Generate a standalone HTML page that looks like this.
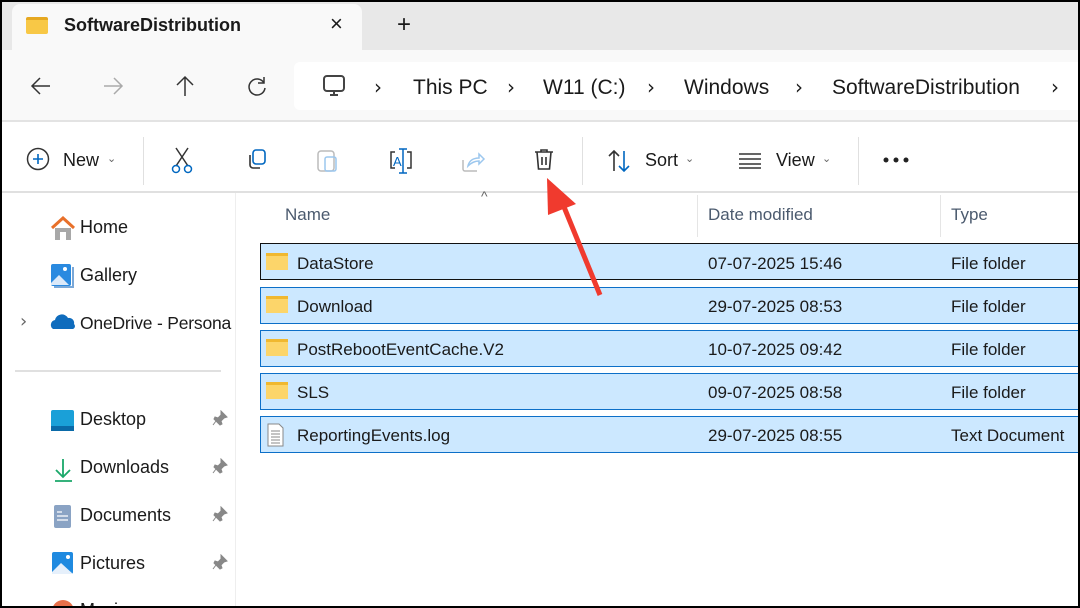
<!DOCTYPE html>
<html><head><style>
*{margin:0;padding:0;box-sizing:border-box}
body{width:1080px;height:608px;overflow:hidden;background:#000;font-family:"Liberation Sans",sans-serif;color:#1a1a1a;position:relative}
.a{position:absolute}
.fr{position:absolute;left:2px;top:2px;right:2px;bottom:2px;background:#fff;overflow:hidden}
.t{position:absolute;white-space:nowrap}
</style></head><body>
<div class="fr">
<div class="a" style="left:0;top:0;width:1076px;height:48px;background:#e8e8e8"></div>
<div class="a" style="left:10px;top:2px;width:350px;height:46px;background:#f9f9f9;border-radius:8px 8px 0 0"></div>
<div class="a" style="left:24px;top:15px;width:22px;height:17px;background:#f8c846;border-top:3px solid #e6a820;border-radius:2px"></div>
<div class="t" style="left:62px;top:13px;font-size:18px;font-weight:bold;color:#1a1a1a">SoftwareDistribution</div>
<div class="t" style="left:328px;top:9px;font-size:22px">×</div>
<div class="t" style="left:395px;top:9px;font-size:24px">+</div>
<div class="a" style="left:0;top:48px;width:1076px;height:72px;background:#f9f9f9;border-bottom:2px solid #e3e3e3"></div>
<svg class="a" style="left:28px;top:74px" width="22" height="20"><path d="M20 10H2M10 2l-8 8 8 8" fill="none" stroke="#333" stroke-width="1.5"/></svg>
<svg class="a" style="left:100px;top:74px" width="22" height="20"><path d="M2 10h18M12 2l8 8-8 8" fill="none" stroke="#aaa" stroke-width="1.5"/></svg>
<svg class="a" style="left:172px;top:73px" width="22" height="22"><path d="M11 21V2M3 10l8-8 8 8" fill="none" stroke="#333" stroke-width="1.5"/></svg>
<svg class="a" style="left:244px;top:73px" width="22" height="22"><path d="M18 8A8 8 0 1 0 19 13M18 2v6h-6" fill="none" stroke="#333" stroke-width="1.5"/></svg>
<div class="a" style="left:292px;top:60px;width:790px;height:48px;background:#fff;border-radius:6px"></div>
<svg class="a" style="left:320px;top:72px" width="26" height="24"><rect x="2" y="2" width="20" height="15" rx="3" fill="none" stroke="#444" stroke-width="2"/><path d="M8 21h8M12 17v4" stroke="#444" stroke-width="2"/></svg>
<div class="t" style="left:372px;top:73px;font-size:20px;font-family:'DejaVu Sans'">›</div>
<div class="t" style="left:411px;top:74px;font-size:21px">This PC</div>
<div class="t" style="left:505px;top:73px;font-size:20px;font-family:'DejaVu Sans'">›</div>
<div class="t" style="left:541px;top:74px;font-size:21px">W11 (C:)</div>
<div class="t" style="left:645px;top:73px;font-size:20px;font-family:'DejaVu Sans'">›</div>
<div class="t" style="left:682px;top:74px;font-size:21px">Windows</div>
<div class="t" style="left:793px;top:73px;font-size:20px;font-family:'DejaVu Sans'">›</div>
<div class="t" style="left:830px;top:74px;font-size:21px">SoftwareDistribution</div>
<div class="t" style="left:1049px;top:73px;font-size:20px;font-family:'DejaVu Sans'">›</div>
<!-- toolbar -->
<svg class="a" style="left:24px;top:145px" width="26" height="26"><circle cx="12" cy="12" r="10.5" fill="none" stroke="#333" stroke-width="1.5"/><path d="M12 7v10M7 12h10" stroke="#0067c0" stroke-width="1.6"/></svg>
<div class="t" style="left:61px;top:148px;font-size:18px">New</div>
<div class="t" style="left:105px;top:150px;font-size:11px;color:#666">⌄</div>
<div class="a" style="left:141px;top:135px;width:1px;height:48px;background:#e0e0e0"></div>
<svg class="a" style="left:168px;top:144px" width="26" height="28"><path d="M6 2l12 18M18 2L6 20" stroke="#333" stroke-width="1.5"/><circle cx="6" cy="23" r="3.5" fill="none" stroke="#0067c0" stroke-width="1.5"/><circle cx="18" cy="23" r="3.5" fill="none" stroke="#0067c0" stroke-width="1.5"/></svg>
<svg class="a" style="left:243px;top:146px" width="26" height="26"><rect x="8" y="2" width="12" height="14" rx="3" fill="none" stroke="#0067c0" stroke-width="1.6"/><path d="M5 7v10a3 3 0 0 0 3 3h7" fill="none" stroke="#333" stroke-width="1.6"/></svg>
<svg class="a" style="left:313px;top:146px" width="26" height="26"><rect x="3" y="3" width="16" height="20" rx="3" fill="none" stroke="#bbb" stroke-width="1.5"/><rect x="10" y="9" width="11" height="14" rx="2" fill="none" stroke="#9cc7ee" stroke-width="1.5"/></svg>
<svg class="a" style="left:385px;top:145px" width="30" height="28"><path d="M8 5H4v16h4M20 5h4v16h-4" fill="none" stroke="#333" stroke-width="1.5"/><path d="M16 2v24M12 2h8M12 26h8" stroke="#0067c0" stroke-width="1.5"/><text x="6" y="19" font-size="13" fill="#0067c0" font-family="Liberation Sans">A</text></svg>
<svg class="a" style="left:458px;top:148px" width="26" height="24"><path d="M3 10v9a2 2 0 0 0 2 2h12" fill="none" stroke="#bbb" stroke-width="1.5"/><path d="M8 16c1-5 5-8 11-8V4l5 5-5 5v-3c-5 0-8 2-11 5z" fill="none" stroke="#9cc7ee" stroke-width="1.5"/></svg>
<svg class="a" style="left:530px;top:145px" width="26" height="28"><path d="M3 5h18M9 5V3h6v2M5 5l1.5 17h11L19 5M10 10v8M14 10v8" fill="none" stroke="#333" stroke-width="1.6"/></svg>
<div class="a" style="left:580px;top:135px;width:1px;height:48px;background:#e0e0e0"></div>
<svg class="a" style="left:605px;top:146px" width="26" height="26"><path d="M7 23V3M2 8l5-5 5 5" fill="none" stroke="#333" stroke-width="1.6"/><path d="M17 3v20M12 18l5 5 5-5" fill="none" stroke="#0067c0" stroke-width="1.6"/></svg>
<div class="t" style="left:643px;top:148px;font-size:18px">Sort</div>
<div class="t" style="left:683px;top:150px;font-size:11px;color:#666">⌄</div>
<svg class="a" style="left:736px;top:150px" width="26" height="18"><path d="M1 2h22M1 7h22M1 12h22M1 16h22" stroke="#333" stroke-width="1.5"/></svg>
<div class="t" style="left:774px;top:148px;font-size:18px">View</div>
<div class="t" style="left:820px;top:150px;font-size:11px;color:#666">⌄</div>
<div class="a" style="left:856px;top:135px;width:1px;height:48px;background:#e0e0e0"></div>
<svg class="a" style="left:880px;top:154px" width="30" height="8"><circle cx="4" cy="4" r="2.5" fill="#222"/><circle cx="14" cy="4" r="2.5" fill="#222"/><circle cx="24" cy="4" r="2.5" fill="#222"/></svg>
<div class="a" style="left:0;top:189px;width:1076px;height:2px;background:#e0e0e0"></div>
<!-- sidebar -->
<div class="a" style="left:233px;top:191px;width:1px;height:420px;background:#eee"></div>
<svg class="a" style="left:48px;top:214px" width="26" height="26"><path d="M2 12L13 2l11 10" fill="none" stroke="#e8702a" stroke-width="3"/><rect x="5" y="12" width="16" height="12" fill="#a8a8a8"/><rect x="10" y="16" width="6" height="8" fill="#fff"/></svg>
<div class="t" style="left:78px;top:215px;font-size:18px">Home</div>
<svg class="a" style="left:48px;top:261px" width="26" height="26"><rect x="1" y="1" width="20" height="22" rx="2" fill="#2a8ae0"/><path d="M1 20l8-8 10 10H1z" fill="#dbe9f9"/><circle cx="15" cy="6" r="2" fill="#fff"/><path d="M23 4v20H4" fill="none" stroke="#7aa8d8" stroke-width="2"/></svg>
<div class="t" style="left:78px;top:263px;font-size:18px">Gallery</div>
<div class="t" style="left:18px;top:309px;font-size:18px;color:#666;font-family:'DejaVu Sans'">›</div>
<svg class="a" style="left:48px;top:311px" width="26" height="18"><path d="M3 16a5 5 0 0 1 2-9 7 7 0 0 1 13-2 5 5 0 0 1 6 6 3 3 0 0 1-1 5z" fill="#0f6cbd"/></svg>
<div class="t" style="left:78px;top:311px;font-size:17.5px;letter-spacing:-0.2px">OneDrive - Persona</div>
<div class="a" style="left:13px;top:368px;width:206px;height:2px;background:#e0e0e0"></div>
<svg class="a" style="left:48px;top:407px" width="26" height="24"><rect x="1" y="1" width="23" height="21" rx="2" fill="#1aa0d8"/><rect x="1" y="17" width="23" height="5" fill="#0a6aa8"/></svg>
<div class="t" style="left:78px;top:407px;font-size:18px">Desktop</div>
<svg class="a" style="left:50px;top:455px" width="24" height="26"><path d="M11 2v18M4 13l7 7 7-7M3 24h17" fill="none" stroke="#1aa86a" stroke-width="1.8"/></svg>
<div class="t" style="left:78px;top:455px;font-size:18px">Downloads</div>
<svg class="a" style="left:50px;top:502px" width="22" height="26"><rect x="2" y="1" width="17" height="23" rx="2" fill="#8aa3c4"/><path d="M5 8h5M5 12h11M5 16h11" stroke="#fff" stroke-width="1.2"/></svg>
<div class="t" style="left:78px;top:503px;font-size:18px">Documents</div>
<svg class="a" style="left:48px;top:549px" width="26" height="26"><rect x="2" y="1" width="21" height="22" rx="2" fill="#1f8ae0"/><path d="M2 21l9-9 12 11H2z" fill="#e6f0fb"/><circle cx="18" cy="6" r="2" fill="#fff"/></svg>
<div class="t" style="left:78px;top:551px;font-size:18px">Pictures</div>
<div class="a" style="left:50px;top:598px;width:22px;height:22px;border-radius:50%;background:#e8704a"></div>
<div class="t" style="left:78px;top:598px;font-size:18px">Music</div>
<svg class="a" style="left:210px;top:408px" width="16" height="16"><path d="M9 1l6 6-3 1-3 3 1 3-2 1-6-6 1-2 3 1 3-3z M4 11l-3 4" fill="#888" stroke="#888"/></svg>
<svg class="a" style="left:210px;top:456px" width="16" height="16"><path d="M9 1l6 6-3 1-3 3 1 3-2 1-6-6 1-2 3 1 3-3z M4 11l-3 4" fill="#888" stroke="#888"/></svg>
<svg class="a" style="left:210px;top:504px" width="16" height="16"><path d="M9 1l6 6-3 1-3 3 1 3-2 1-6-6 1-2 3 1 3-3z M4 11l-3 4" fill="#888" stroke="#888"/></svg>
<svg class="a" style="left:210px;top:552px" width="16" height="16"><path d="M9 1l6 6-3 1-3 3 1 3-2 1-6-6 1-2 3 1 3-3z M4 11l-3 4" fill="#888" stroke="#888"/></svg>
<!-- headers -->
<div class="t" style="left:479px;top:186px;font-size:14px;color:#666">^</div>
<div class="t" style="left:283px;top:203px;font-size:17px;color:#4b5a6e">Name</div>
<div class="a" style="left:695px;top:193px;width:1px;height:42px;background:#e5e5e5"></div>
<div class="t" style="left:706px;top:203px;font-size:17px;color:#4b5a6e">Date modified</div>
<div class="a" style="left:938px;top:193px;width:1px;height:42px;background:#e5e5e5"></div>
<div class="t" style="left:949px;top:203px;font-size:17px;color:#4b5a6e">Type</div>
<!-- rows -->
<div class="a" style="left:258px;top:241px;width:830px;height:37px;background:#cce8ff;border:1.5px solid #111"></div>
<div class="a" style="left:258px;top:285px;width:830px;height:37px;background:#cce8ff;border:1.5px solid #0c6fc8"></div>
<div class="a" style="left:258px;top:328px;width:830px;height:37px;background:#cce8ff;border:1.5px solid #0c6fc8"></div>
<div class="a" style="left:258px;top:371px;width:830px;height:37px;background:#cce8ff;border:1.5px solid #0c6fc8"></div>
<div class="a" style="left:258px;top:414px;width:830px;height:37px;background:#cce8ff;border:1.5px solid #0c6fc8"></div>
<div class="a" style="left:264px;top:251px;width:22px;height:17px;background:#fcd56a;border-top:3px solid #f0b830"></div>
<div class="a" style="left:264px;top:294px;width:22px;height:17px;background:#fcd56a;border-top:3px solid #f0b830"></div>
<div class="a" style="left:264px;top:337px;width:22px;height:17px;background:#fcd56a;border-top:3px solid #f0b830"></div>
<div class="a" style="left:264px;top:380px;width:22px;height:17px;background:#fcd56a;border-top:3px solid #f0b830"></div>
<svg class="a" style="left:265px;top:421px" width="18" height="24"><path d="M1 1h11l4 4v18H1z" fill="#fff" stroke="#888"/><path d="M4 8h9M4 11h9M4 14h9M4 17h9M4 20h9" stroke="#888"/></svg>
<div class="t" style="left:295px;top:252px;font-size:17px">DataStore</div>
<div class="t" style="left:295px;top:295px;font-size:17px">Download</div>
<div class="t" style="left:295px;top:338px;font-size:17px">PostRebootEventCache.V2</div>
<div class="t" style="left:295px;top:381px;font-size:17px">SLS</div>
<div class="t" style="left:295px;top:424px;font-size:17px">ReportingEvents.log</div>
<div class="t" style="left:706px;top:252px;font-size:17px">07-07-2025 15:46</div>
<div class="t" style="left:706px;top:295px;font-size:17px">29-07-2025 08:53</div>
<div class="t" style="left:706px;top:338px;font-size:17px">10-07-2025 09:42</div>
<div class="t" style="left:706px;top:381px;font-size:17px">09-07-2025 08:58</div>
<div class="t" style="left:706px;top:424px;font-size:17px">29-07-2025 08:55</div>
<div class="t" style="left:949px;top:252px;font-size:17px">File folder</div>
<div class="t" style="left:949px;top:295px;font-size:17px">File folder</div>
<div class="t" style="left:949px;top:338px;font-size:17px">File folder</div>
<div class="t" style="left:949px;top:381px;font-size:17px">File folder</div>
<div class="t" style="left:949px;top:424px;font-size:17px">Text Document</div>
<!-- arrow -->
<svg class="a" style="left:0;top:0" width="1076" height="604"><path d="M598 293L560 200" stroke="#f03a2e" stroke-width="5"/><path d="M545 176l29 26-28 11z" fill="#f03a2e"/></svg>
</div>
</body></html>
